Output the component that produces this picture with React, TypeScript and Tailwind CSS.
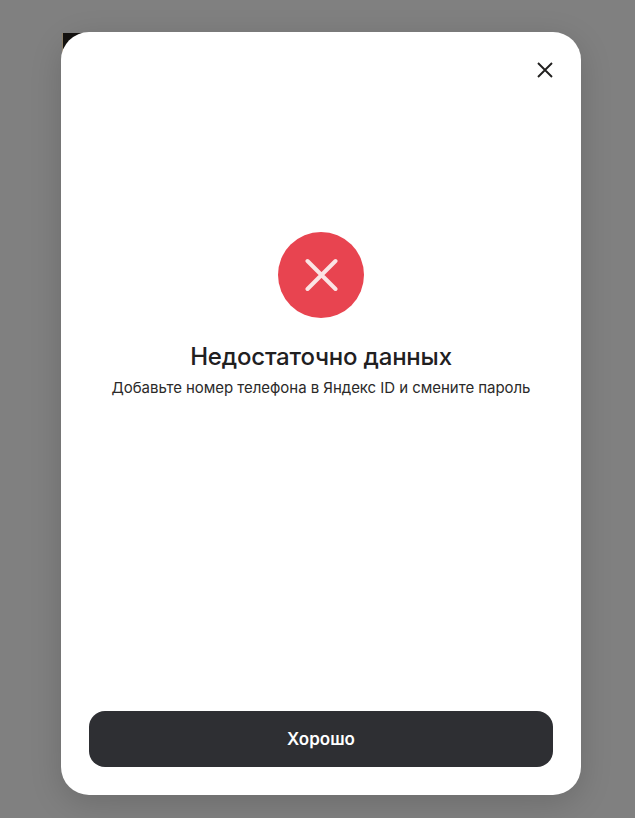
import React from 'react';

const FONT = 'font-["Inter","Noto_Sans",sans-serif]';

export default function App() {
  return (
    <div className={`relative h-[818px] w-[635px] overflow-hidden bg-[#808080] pl-[61px] pt-[32px] ${FONT}`}>
      {/* page content peeking out from behind the dialog */}
      <div className="absolute left-[62px] top-[33px] h-[20px] w-[20px] border-l border-[#8f8068] bg-[#141210]" />

      <div className="relative flex h-[763px] w-[520px] flex-col rounded-[28px] bg-white px-[28px] pb-[28px] shadow-[0_8px_32px_rgba(0,0,0,0.16)]">
        <button className="absolute right-[24px] top-[26px] flex h-[24px] w-[24px] items-center justify-center text-[#21201f]">
          <svg width="16" height="16" viewBox="0 0 16 16" fill="none" stroke="currentColor" strokeWidth="1.9">
            <path d="M1 1l14 14M15 1L1 15" />
          </svg>
        </button>

        <div className="flex flex-1 flex-col items-center pt-[200px]">
          <div className="flex h-[86px] w-[86px] items-center justify-center rounded-full bg-[#e84450]">
            <svg width="34" height="34" viewBox="0 0 34 34" fill="none" stroke="#fbe4e4" strokeWidth="4" strokeLinecap="round">
              <path d="M3.5 3l28 28M31.5 3l-28 28" />
            </svg>
          </div>
          <h1 className="mt-[23px] text-[24px] font-medium leading-[32px] tracking-[-0.2px] text-[#21201f]">
            Недостаточно данных
          </h1>
          <p className="mt-[5px] text-[15px] leading-[20px] tracking-[-0.04px] text-[#2b2a29]">
            Добавьте номер телефона в Яндекс ID и смените пароль
          </p>
        </div>

        <button className="flex h-[56px] w-full items-center justify-center rounded-[16px] bg-[#2e2f33] pt-[1px] text-[17px] font-semibold text-white">
          Хорошо
        </button>
      </div>
    </div>
  );
}
